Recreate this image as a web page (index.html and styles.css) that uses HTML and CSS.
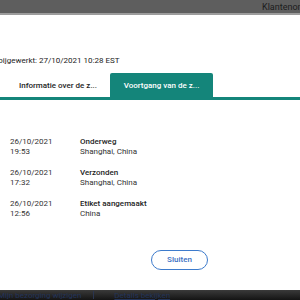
FILE: index.html
```html
<!DOCTYPE html>
<html lang="nl">
<head>
    <meta charset="UTF-8">
    <meta name="viewport" content="width=device-width, initial-scale=1.0">
    <title>Zending volgen</title>
    <link rel="stylesheet" href="styles.css">
</head>
<body>

    <!-- Top bar behind the dialog -->
    <div class="topbar">
        <span class="topbar-link">Klantenondersteuning</span>
    </div>

    <!-- Dialog -->
    <div class="dialog">
        <div class="updated">Laatst bijgewerkt: 27/10/2021 10:28 EST</div>

        <div class="tabs">
            <div class="tab">Informatie over de z...</div>
            <div class="tab active">Voortgang van de z...</div>
        </div>

        <div class="events">
            <div class="event">
                <div class="when">26/10/2021<br>19:53</div>
                <div class="what"><b>Onderweg</b><br>Shanghai, China</div>
            </div>
            <div class="event">
                <div class="when">26/10/2021<br>17:32</div>
                <div class="what"><b>Verzonden</b><br>Shanghai, China</div>
            </div>
            <div class="event">
                <div class="when">26/10/2021<br>12:56</div>
                <div class="what"><b>Etiket aangemaakt</b><br>China</div>
            </div>
        </div>

        <div class="actions">
            <button class="button">Sluiten</button>
        </div>
    </div>

    <!-- Bottom bar behind the dialog -->
    <div class="bottombar">
        <span class="bottom-link first">Mijn bezorging wijzigen</span>
        <span class="divider"></span>
        <span class="bottom-link">Details bekijken</span>
    </div>

</body>
</html>
```

FILE: styles.css
```css
body, html {
    margin: 0;
    padding: 0;
    width: 300px;
    height: 300px;
    overflow: hidden;
    font-family: Roboto, "Noto Sans", Arial, sans-serif;
    background-color: #ffffff;
}

/* Top bar */
.topbar {
    height: 13px;
    background-color: #5e5e5e;
    border-bottom: 2px solid #9c9c9c;
    display: flex;
    align-items: center;
    padding-left: 262px;
    overflow: hidden;
    white-space: nowrap;
}

.topbar-link {
    font-size: 9px;
    color: #1c1c1c;
}

/* Dialog */
.dialog {
    height: 275px;
    background-color: #ffffff;
    display: flex;
    flex-direction: column;
}

.updated {
    font-size: 8px;
    color: #222;
    margin-top: 41px;
    margin-left: -26px;
    white-space: nowrap;
}

/* Tabs */
.tabs {
    display: flex;
    margin-top: 8px;
    border-bottom: 3px solid #14857a;
}

.tab {
    width: 110px;
    height: 24px;
    display: flex;
    align-items: center;
    justify-content: center;
    font-size: 8px;
    font-weight: 500;
    color: #1e1e1e;
    padding-left: 6px;
    box-sizing: border-box;
}

.tab.active {
    width: 103px;
    padding-left: 0;
    background-color: #14857a;
    color: #ffffff;
    border-radius: 2px 2px 0 0;
}

/* Event list */
.events {
    margin-top: 37px;
    display: flex;
    flex-direction: column;
    gap: 11px;
}

.event {
    display: flex;
    font-size: 8px;
    line-height: 10px;
    color: #333;
}

.when {
    width: 70px;
    padding-left: 10px;
}

.what b {
    font-weight: 500;
    color: #1e1e1e;
}

/* Close button */
.actions {
    margin-top: 28px;
    padding-left: 151px;
}

.button {
    width: 57px;
    height: 20px;
    border: 1.5px solid #3d7bcc;
    border-radius: 10px;
    background: #ffffff;
    color: #3a6fc2;
    font-family: Roboto, Arial, sans-serif;
    font-size: 8px;
    font-weight: 500;
    padding: 0;
}

/* Bottom bar */
.bottombar {
    height: 10px;
    background: linear-gradient(#3a3a3a, #141414);
    display: flex;
    align-items: center;
    white-space: nowrap;
    overflow: hidden;
    font-size: 8px;
}

.bottom-link {
    color: #23345a;
}

.bottom-link.first {
    margin-left: -2px;
}

.divider {
    width: 1px;
    height: 8px;
    background-color: #2a3550;
    margin: 0 20px 0 12px;
}

.bottom-link:last-child {
    text-decoration: underline;
}
```
